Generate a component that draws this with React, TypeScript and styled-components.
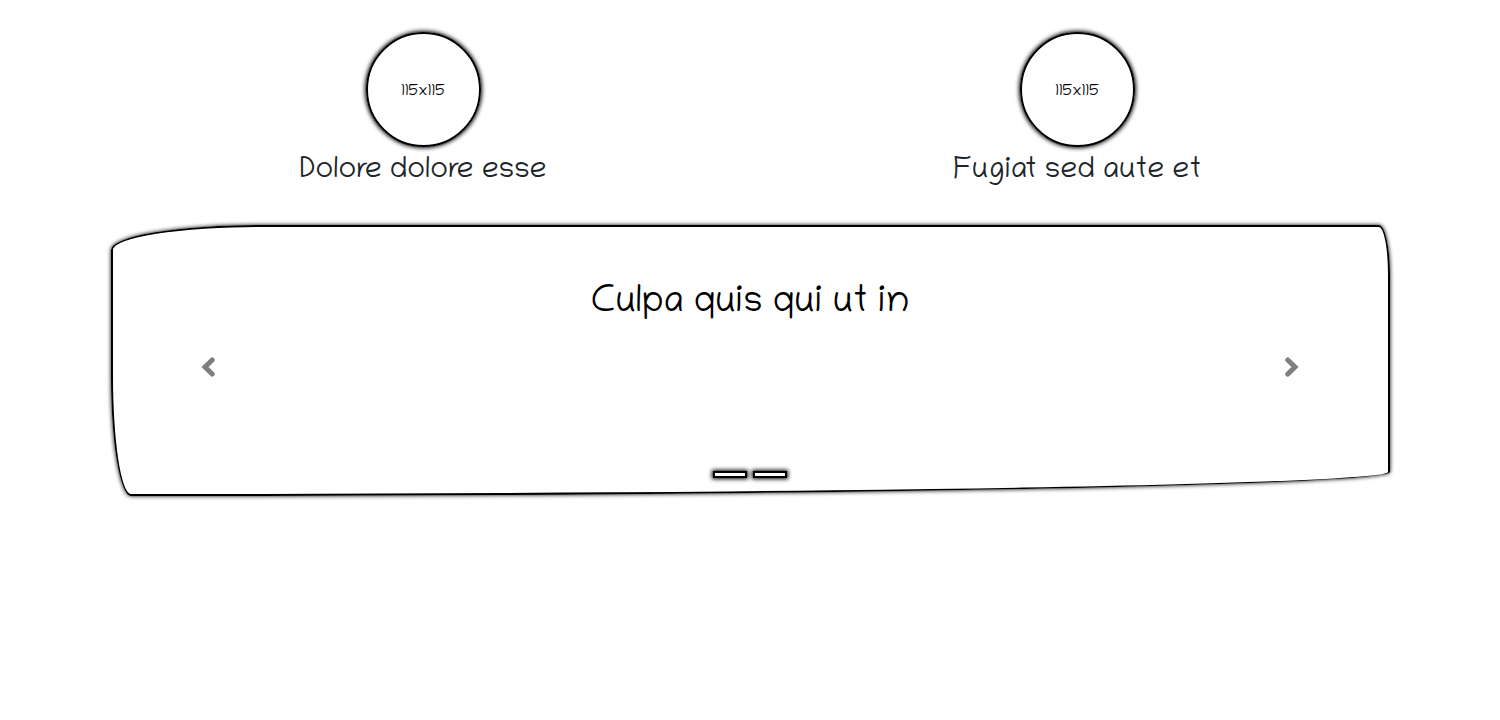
import React from "react";
import styled, { createGlobalStyle } from "styled-components";

const GlobalStyle = createGlobalStyle`
  *, *::before, *::after { box-sizing: border-box; }
  body {
    margin: 0;
    background: #fff;
    color: #212529;
    font-family: "Chilanka", "Lato", sans-serif;
    font-size: 16px;
    line-height: 24px;
  }
`;

const Page = styled.main`
  padding: 32px 0;
`;

const People = styled.section`
  display: grid;
  grid-template-columns: 1fr 1fr;
  padding: 0 96px;
`;

const Person = styled.figure`
  display: flex;
  flex-direction: column;
  align-items: center;
  margin: 0;
`;

const Avatar = styled.div`
  display: flex;
  align-items: center;
  justify-content: center;
  width: 115px;
  height: 115px;
  padding-top: 4px;
  border: 2px solid #000;
  border-radius: 50%;
  box-shadow: 0 0 4px 1px #000;
  color: #000;
  font-size: 16px;
`;

const Name = styled.figcaption`
  padding-top: 6px;
  font-size: 30px;
  line-height: 38px;
`;

const Carousel = styled.section`
  position: relative;
  display: flex;
  flex-direction: column;
  align-items: center;
  width: 85%;
  box-sizing: content-box;
  min-height: 267px;
  margin: 34px auto 0;
  border: 2px solid #000;
  border-radius: 150px 11px 1250px 20px / 25px 50px 24px 120px;
  box-shadow: 0 0 4px #000;
  color: #000;
`;

const Title = styled.h1`
  margin: 54px 0 0;
  font-size: 37px;
  font-weight: 400;
  line-height: 48px;
`;

const Control = styled.button<{ $side: "left" | "right" }>`
  position: absolute;
  top: 0;
  bottom: 0;
  ${(p) => p.$side}: 0;
  display: flex;
  align-items: center;
  justify-content: center;
  width: 15%;
  padding: 12px 0 0;
  border: 0;
  background: none;
  color: #000;
  opacity: 0.5;
  cursor: pointer;
`;

const Indicators = styled.div`
  position: absolute;
  left: 0;
  right: 0;
  bottom: 16px;
  display: flex;
  justify-content: center;
  gap: 6px;
`;

const Indicator = styled.button`
  width: 34px;
  height: 7px;
  padding: 0;
  border: 2px solid #000;
  background: #fff;
  box-shadow: 0 0 4px 1px #000;
  cursor: pointer;
`;

const chevrons = {
  left: "M14.2 3 L7 10 L14.2 17",
  right: "M5.8 3 L13 10 L5.8 17",
};

const Chevron = ({ side }: { side: "left" | "right" }) => (
  <svg
    width="20"
    height="20"
    viewBox="0 0 20 20"
    fill="none"
    stroke="currentColor"
    strokeWidth="5"
    strokeLinecap="round"
    strokeLinejoin="miter"
    aria-hidden="true"
  >
    <path d={chevrons[side]} />
  </svg>
);

const people = ["Dolore dolore esse", "Fugiat sed aute et"];

export default function App() {
  return (
    <Page>
      <GlobalStyle />
      <People>
        {people.map((name) => (
          <Person key={name}>
            <Avatar>115x115</Avatar>
            <Name>{name}</Name>
          </Person>
        ))}
      </People>
      <Carousel aria-roledescription="carousel">
        <Title>Culpa quis qui ut in</Title>
        <Control $side="left" type="button" aria-label="Previous">
          <Chevron side="left" />
        </Control>
        <Control $side="right" type="button" aria-label="Next">
          <Chevron side="right" />
        </Control>
        <Indicators>
          <Indicator type="button" aria-label="Slide 1" />
          <Indicator type="button" aria-label="Slide 2" />
        </Indicators>
      </Carousel>
    </Page>
  );
}
